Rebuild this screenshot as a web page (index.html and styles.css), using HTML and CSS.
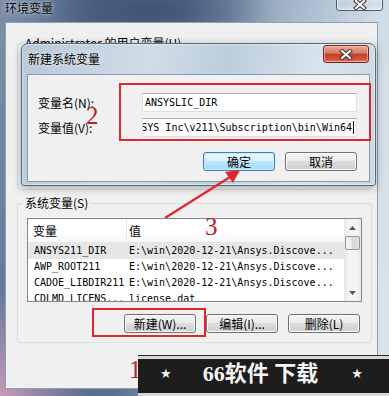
FILE: index.html
```html
<!DOCTYPE html>
<html>
	<head>
		<meta charset="utf-8">
		<title>环境变量</title>
		<link rel="stylesheet" href="styles.css">
	</head>
	<body>

		<!-- outer window: 环境变量 -->
		<div id=EnvWindow class="Window">
			<div class="TitleBar">
				<span class="Caption">环境变量</span>
				<div class="CloseButton GlassClose">
					<svg class="CloseGlyph" viewBox="0 0 14 11" width="14" height="11"><path class="Outline" d="M3 2 L11 9 M11 2 L3 9"/><path class="Stroke" d="M3 2 L11 9 M11 2 L3 9"/></svg>
				</div>
			</div>
			<div class="Client">
				<fieldset class="Group" id=UserGroup>
					<legend>Administrator 的用户变量(U)</legend>
				</fieldset>
				<fieldset class="Group" id=SystemGroup>
					<legend>系统变量(S)</legend>
					<div class="ListView">
						<div class="Columns">
							<div class="Header">
								<div class="ColName">变量</div>
								<div class="ColValue">值</div>
							</div>
							<div class="Row Selected">
								<div class="ColName">ANSYS211_DIR</div>
								<div class="ColValue">E:\win\2020-12-21\Ansys.Discove...</div>
							</div>
							<div class="Row">
								<div class="ColName">AWP_ROOT211</div>
								<div class="ColValue">E:\win\2020-12-21\Ansys.Discove...</div>
							</div>
							<div class="Row">
								<div class="ColName">CADOE_LIBDIR211</div>
								<div class="ColValue">E:\win\2020-12-21\Ansys.Discove...</div>
							</div>
							<div class="Row">
								<div class="ColName">CDLMD_LICENS...</div>
								<div class="ColValue">license.dat</div>
							</div>
						</div>
						<div class="ScrollBar">
							<div class="ScrollArrow"><svg viewBox="0 0 7 4" width="7" height="4"><polygon points="0,4 3.5,0 7,4"/></svg></div>
							<div class="ScrollThumb"></div>
							<div class="ScrollTrack"></div>
							<div class="ScrollArrow"><svg viewBox="0 0 7 4" width="7" height="4"><polygon points="0,0 3.5,4 7,0"/></svg></div>
						</div>
					</div>
					<div class="ButtonRow">
						<div class="Button">新建(W)...</div>
						<div class="Button">编辑(I)...</div>
						<div class="Button">删除(L)</div>
					</div>
				</fieldset>
			</div>
		</div>

		<!-- dialog on top: 新建系统变量 -->
		<div id=NewVarDialog class="Window">
			<div class="DialogTitle">
				<span class="Caption">新建系统变量</span>
				<div class="CloseButton RedClose">
					<svg class="CloseGlyph" viewBox="0 0 14 11" width="14" height="11"><path class="Outline" d="M3 2 L11 9 M11 2 L3 9"/><path class="Stroke" d="M3 2 L11 9 M11 2 L3 9"/></svg>
				</div>
			</div>
			<div class="DialogClient">
				<div class="Form">
					<label>变量名(N):</label>
					<div class="TextBox">ANSYSLIC_DIR</div>
					<label>变量值(V):</label>
					<div class="TextBox Scrolled"><span>ANSYS Inc\v211\Subscription\bin\Win64</span><i class="Caret"></i></div>
				</div>
				<div class="DialogButtons">
					<div class="Button Default">确定</div>
					<div class="Button">取消</div>
				</div>
			</div>
		</div>

		<!-- red annotations -->
		<div class="Mark" id=MarkInputs></div>
		<div class="Mark" id=MarkNew></div>
		<div class="Step" id=Step1>1</div>
		<div class="Step" id=Step2>2</div>
		<div class="Step" id=Step3>3</div>
		<svg id=Arrow width="389" height="396" viewBox="0 0 389 396">
			<line x1="165" y1="218" x2="230" y2="177"/>
			<polygon points="240,170 225,172 233,183"/>
		</svg>

		<!-- watermark -->
		<div id=Banner>
			<span class="Star">★</span>
			<span class="BannerText">66软件 下载</span>
			<span class="Star">★</span>
		</div>

	</body>
</html>
```

FILE: styles.css
```css
:root
{
	--face: #f0f0f0;
	--mark: #e2262b;
	--stepText: #b5222a;
	--mono: "DejaVu Sans Mono", "Liberation Mono", monospace;
	--cjk: "Noto Sans CJK SC", "Liberation Sans", sans-serif;
}

*
{
	box-sizing: border-box;
}

html,
body
{
	margin: 0;
	width: 389px;
	height: 396px;
	overflow: hidden;
}

body
{
	position: relative;
	font-family: var(--cjk);
	font-size: 12px;
	line-height: 14px;
	color: #000;
	/* aero glass behind everything */
	background:
		radial-gradient( ellipse 90px 110px at 0 400px, #c79bb9, rgba(199,155,185,0) ),
		radial-gradient( ellipse 120px 40px at 150px 10px, #3f5473, rgba(63,84,115,0) ),
		linear-gradient( 100deg, #7d90a8 0%, #52678a 22%, #5b7091 40%, #9fb2c6 62%, #cfdbe5 82%, #dce5ec 100% );
}

/* ---------- outer window ---------- */

#EnvWindow
{
	display: flex;
	flex-direction: column;
	height: 389px;
	padding: 0 11px 0 5px;
}

.TitleBar
{
	display: flex;
	height: 22px;
	padding-top: 1px;
}

.Caption
{
	line-height: 14px;
	text-shadow: 0 0 6px rgba(255,255,255,0.7), 0 0 2px rgba(255,255,255,0.6);
}

.CloseButton
{
	display: flex;
	align-items: center;
	justify-content: center;
	margin-left: auto;
	border-radius: 3px;
}

.GlassClose
{
	width: 47px;
	height: 17px;
	margin-top: -7px;
	margin-right: -5px;
	padding-top: 4px;
	border: 1px solid #4a5b70;
	background: linear-gradient( rgba(255,255,255,0.35), rgba(255,255,255,0.15) 50%, rgba(255,255,255,0.05) 50%, rgba(255,255,255,0.3) );
	box-shadow: inset 0 0 0 1px rgba(255,255,255,0.5);
}

.CloseGlyph path
{
	fill: none;
	stroke-linecap: square;
}
.CloseGlyph .Outline
{
	stroke: #3a2c30;
	stroke-width: 4;
}
.CloseGlyph .Stroke
{
	stroke: #fff;
	stroke-width: 2.2;
}

.Client
{
	flex: 1;
	background: var(--face);
	border: 1px solid #8f9fb3;
	padding: 13px 5px 0 11px;
}

.Group
{
	margin: 0;
	min-width: 0;
	border: 1px solid #d5dfe5;
	border-radius: 3px;
	padding: 8px 9px 9px 9px;
}

.Group legend
{
	padding: 0 2px;
	margin-left: -4px;
	line-height: 14px;
}

#UserGroup
{
	height: 154px;
}

#SystemGroup
{
	margin-top: 6px;
}

/* ---------- list view ---------- */

.ListView
{
	display: flex;
	height: 84px;
	border: 1px solid #828790;
	background: #fff;
}

.Columns
{
	flex: 1;
	overflow: hidden;
}

.Header,
.Row
{
	display: flex;
	white-space: nowrap;
}

.Header
{
	height: 24px;
	line-height: 24px;
	border-bottom: 1px solid #e2e5ea;
	background: linear-gradient( #fff, #fff 60%, #f6f7f9 );
}

.ColName
{
	width: 99px;
	padding-left: 5px;
	overflow: hidden;
}

.Header .ColName
{
	border-right: 1px solid #e3e8ee;
}

.ColValue
{
	padding-left: 2px;
}

.Row
{
	height: 16px;
	line-height: 16px;
	font-family: var(--mono);
	font-size: 10px;
}

.Row .ColName
{
	padding-left: 6px;
}

.Row.Selected
{
	background: #e6e6e6;
}

.ScrollBar
{
	display: flex;
	flex-direction: column;
	width: 17px;
	background: linear-gradient( 90deg, #e6e6e6, #f4f4f4 25%, #f4f4f4 75%, #e9e9e9 );
}

.ScrollArrow
{
	display: flex;
	align-items: center;
	justify-content: center;
	height: 17px;
}

.ScrollArrow polygon
{
	fill: #555;
}

.ScrollThumb
{
	height: 14px;
	margin: 0 1px;
	border: 1px solid #979797;
	border-radius: 2px;
	background: linear-gradient( 90deg, #f4f4f4, #e8e8e8 50%, #d8d8d8 50%, #e2e2e2 );
}

.ScrollTrack
{
	flex: 1;
}

/* ---------- buttons ---------- */

.ButtonRow
{
	display: flex;
	justify-content: flex-end;
	gap: 10px;
	margin-top: 12px;
	padding-right: 2px;
}

.Button
{
	width: 72px;
	height: 19px;
	line-height: 17px;
	text-align: center;
	border: 1px solid #707070;
	border-radius: 3px;
	background: linear-gradient( #f2f2f2, #ebebeb 50%, #dddddd 50%, #cfcfcf );
	box-shadow: inset 0 0 0 1px #fcfcfc;
}

.Button.Default
{
	border-color: #3c7fb1;
	background: linear-gradient( #eaf6fd, #d9f0fc 50%, #bee6fd 50%, #a7d9f5 );
	box-shadow: inset 0 0 0 1px #c6ecfc;
}

/* ---------- new variable dialog ---------- */

#NewVarDialog
{
	position: absolute;
	left: 21px;
	top: 43px;
	width: 355px;
	height: 143px;
	display: flex;
	flex-direction: column;
	padding: 0 5px 3px 5px;
	border: 1px solid #55687e;
	border-radius: 7px 7px 3px 3px;
	background: linear-gradient( 100deg, #b6c8d9 0%, #d0dde8 35%, #bccddd 55%, #d9e4ed 80%, #c9d8e4 100% );
	box-shadow: 0 0 0 1px rgba(255,255,255,0.4) inset, 0 2px 8px rgba(0,0,0,0.3);
}

.DialogTitle
{
	display: flex;
	height: 30px;
	padding-left: 1px;
	line-height: 30px;
}

.DialogTitle .Caption
{
	line-height: 30px;
}

.RedClose
{
	width: 46px;
	height: 18px;
	margin-top: 1px;
	margin-right: 1px;
	border: 1px solid #6b2a22;
	background: linear-gradient( #e9a898, #d87a64 45%, #c23d25 50%, #d3583c 85%, #e2806a );
	box-shadow: inset 0 0 0 1px rgba(255,220,210,0.5);
}

.DialogClient
{
	flex: 1;
	background: var(--face);
	border: 1px solid #8a9aae;
	padding: 18px 12px 0 10px;
}

.Form
{
	display: grid;
	grid-template-columns: 104px 215px;
	row-gap: 6px;
	align-items: center;
}

.TextBox
{
	display: flex;
	align-items: center;
	height: 19px;
	padding: 0 2px;
	overflow: hidden;
	white-space: nowrap;
	font-family: var(--mono);
	font-size: 10px;
	background: #fff;
	border: 1px solid #dbdfe6;
	border-top-color: #abadb3;
}

.TextBox.Scrolled
{
	justify-content: flex-end;
}

.Caret
{
	flex: none;
	width: 1px;
	height: 13px;
	margin-left: 1px;
	background: #000;
}

.DialogButtons
{
	display: flex;
	justify-content: flex-end;
	gap: 10px;
	margin-top: 15px;
}

/* ---------- annotations ---------- */

.Mark
{
	position: absolute;
	border: 2px solid var(--mark);
}

#MarkInputs
{
	left: 119px;
	top: 83px;
	width: 252px;
	height: 58px;
}

#MarkNew
{
	left: 92px;
	top: 308px;
	width: 114px;
	height: 29px;
}

.Step
{
	position: absolute;
	font-family: "Liberation Serif", serif;
	font-size: 25px;
	line-height: 25px;
	color: var(--stepText);
}

#Step1	{	left: 129px;	top: 357px;	}
#Step2	{	left: 86px;		top: 103px;	}
#Step3	{	left: 205px;	top: 214px;	}

#Arrow
{
	position: absolute;
	left: 0;
	top: 0;
}

#Arrow line
{
	stroke: var(--mark);
	stroke-width: 2.2;
}

#Arrow polygon
{
	fill: var(--mark);
}

/* ---------- watermark ---------- */

#Banner
{
	position: absolute;
	left: 138px;
	top: 355px;
	width: 251px;
	height: 41px;
	display: flex;
	align-items: center;
	padding: 3px 0 6px 0;
	color: #f4f4f4;
	background: #1d1d1d;
	box-shadow: inset 0 1px 0 #2a2a2a, inset 0 4px 0 #d6d6d6, inset 0 -3px 0 #d6d6d6;
}

.Star
{
	font-family: "DejaVu Sans", sans-serif;
	font-size: 13px;
}

#Banner .Star:first-child
{
	margin-left: 22px;
}

.BannerText
{
	margin-left: 31px;
	margin-right: 33px;
	font-family: "Liberation Serif", "Noto Sans CJK SC", serif;
	font-weight: bold;
	font-size: 22px;
	line-height: 24px;
}
```
